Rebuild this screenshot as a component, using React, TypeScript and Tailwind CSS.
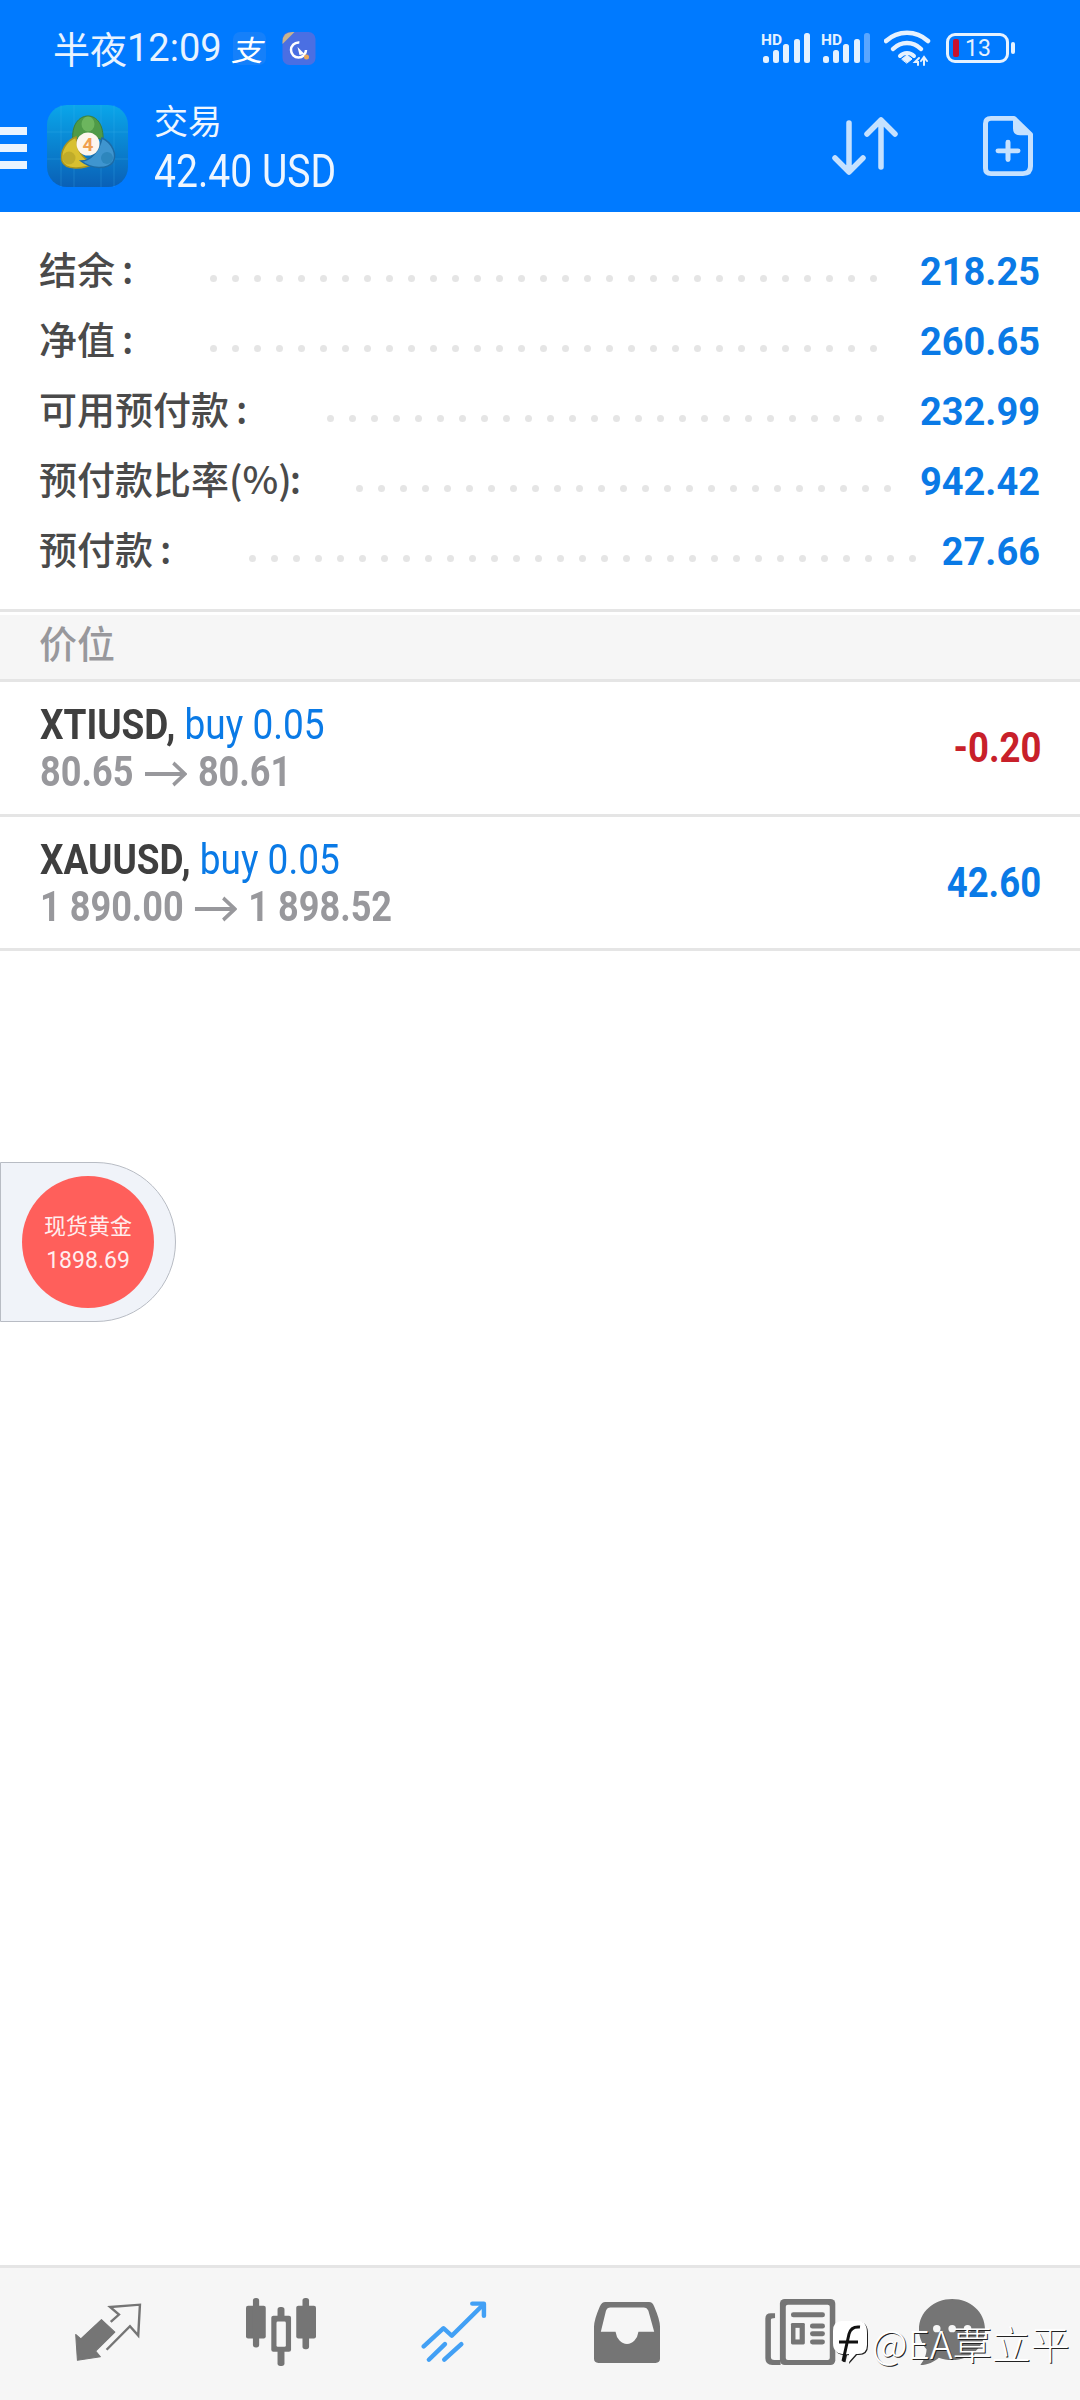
const cjk = '"Noto Sans CJK SC", "Noto Sans", sans-serif';

function Signal({ faded }: { faded?: boolean }) {
  const bars = [
    [2, 57, 6, 7],
    [12, 51, 6, 13],
    [22, 45, 6, 19],
    [33, 40, 6, 24],
    [43, 34, 6, 30],
  ];
  return (
    <svg width="50" height="34" viewBox="0 32 50 34">
      <text x="0" y="46" fontSize="15.5" fontWeight="700" fill="#e6f2ff" fontFamily="Roboto, sans-serif">HD</text>
      {bars.map((b, i) => (
        <rect key={i} x={b[0]} y={b[1]} width={b[2]} height={b[3]} rx="2.5" fill={faded && i === 4 ? "#5aa6ff" : "#e6f2ff"} />
      ))}
    </svg>
  );
}

function StatusIcons() {
  return (
    <div className="ml-auto flex items-center pr-[65px]">
      <Signal />
      <div className="ml-[10px]"><Signal faded /></div>
      <svg className="ml-[13px]" width="47" height="36" viewBox="0 0 47 36" fill="none" stroke="#e6f2ff" strokeLinecap="round">
        <path d="M2 11 C14 0 32 0 44 11" strokeWidth="4.5" />
        <path d="M9 19 C17 11 29 11 37 19" strokeWidth="4.5" />
        <path d="M16 26 C20 22 26 22 30 26" strokeWidth="4" />
        <path d="M18 29 L23 25 L28 29 L23 33 Z" fill="#e6f2ff" strokeWidth="1" />
        <path d="M35 28 L31 32 L34 32 L34 35 M40 35 V28 M37 31 L40 27 L43 31" strokeWidth="2" />
      </svg>
      <div className="ml-[15px] flex items-center">
        <div className="flex h-[30px] w-[63px] items-center rounded-[9px] border-[3px] border-[#e6f2ff] pl-[4px]">
          <div className="h-[18px] w-[6px] rounded-[2px] bg-[#c8102e]" />
          <span className="ml-[6px] text-[23px] leading-none text-[#e6f2ff]" style={{ fontFamily: "Roboto, sans-serif" }}>13</span>
        </div>
        <div className="ml-[2px] h-[12px] w-[4px] rounded-full bg-[#e6f2ff]" />
      </div>
    </div>
  );
}

function Mt4Logo() {
  return (
    <svg width="81" height="82" viewBox="0 0 81 82">
      <defs>
        <linearGradient id="mtbg" x1="0" y1="0" x2="0" y2="1">
          <stop offset="0" stopColor="#0aa6ea" />
          <stop offset="1" stopColor="#0a60b6" />
        </linearGradient>
      </defs>
      <rect width="81" height="82" rx="20" fill="url(#mtbg)" />
      <path d="M0 27H81M0 54H81M14 0V82M27 0V82M54 0V82M67 0V82" stroke="#4cb8ee" strokeOpacity="0.25" strokeWidth="1" />
      <path d="M26 36 C24 20 32 11 41 11 C50 11 57 20 56 36 C50 30 32 30 26 36Z" fill="#4f9a48" stroke="#3c7f38" strokeWidth="1" />
      <ellipse cx="41" cy="19" rx="6.5" ry="7.5" fill="#6cb55e" />
      <path d="M29 32 C19 36 13 46 15 56 C18 65 36 65 48 58 C38 56 31 48 30 38Z" fill="#d8c030" stroke="#a89420" strokeWidth="1.5" />
      <circle cx="22" cy="53" r="6.5" fill="#c0ac2a" />
      <path d="M55 33 C66 38 70 50 66 57 C60 65 44 64 34 56 C44 56 52 46 55 33Z" fill="#3f95cf" stroke="#1d6ba5" strokeWidth="1.5" />
      <circle cx="60" cy="53" r="6" fill="#2d86bd" />
      <circle cx="41" cy="39" r="11.5" fill="#fdf6ee" />
      <text x="41" y="46" textAnchor="middle" fontSize="19" fontWeight="700" fill="#f0a050" fontFamily="Roboto, sans-serif">4</text>
    </svg>
  );
}

const dotRows = [
  { label: "结余", value: "218.25", start: 210, dots: 31 },
  { label: "净值", value: "260.65", start: 210, dots: 31 },
  { label: "可用预付款", value: "232.99", start: 327, dots: 26 },
  { label: "预付款比率(%)", value: "942.42", start: 356, dots: 25 },
  { label: "预付款", value: "27.66", start: 249, dots: 31 },
];

function SummaryRow({ row }: { row: (typeof dotRows)[number] }) {
  const tight = row.label.includes("%");
  return (
    <div className="relative flex h-[70px] items-center">
      <span className="-ml-[1px] shrink-0 whitespace-nowrap pb-[4px] text-[38px] font-medium leading-none text-[#4a4a4a]" style={{ fontFamily: cjk }}>
        {row.label}
        <span className={tight ? "-ml-[2px]" : "ml-[7px]"}>:</span>
      </span>
      <div className="absolute top-[40px] flex gap-[15px]" style={{ left: row.start - 40 }}>
        {Array.from({ length: row.dots }).map((_, i) => (
          <span key={i} className="h-[7px] w-[7px] rounded-full bg-[#e5e5e5]" />
        ))}
      </div>
      <span className="ml-auto pt-[3px] text-[38px] font-bold leading-none text-[#0a7ae6]" style={{ fontFamily: "Roboto, sans-serif" }}>
        {row.value}
      </span>
    </div>
  );
}

function Arrow() {
  return (
    <svg className="mx-[13px] inline-block align-[-1px]" width="49" height="26" viewBox="0 0 49 26" fill="none" stroke="#98989c" strokeWidth="4">
      <path d="M0 13 H47 M33 2 L46.5 13 L33 24" />
    </svg>
  );
}

function Position({ sym, vol, from, to, profit, red }: { sym: string; vol: string; from: string; to: string; profit: string; red?: boolean }) {
  return (
    <div className="flex h-[134.5px] items-center justify-between border-b-[3px] border-[#e5e5e5] pl-[40px] pr-[40px]" style={{ fontFamily: "Roboto, sans-serif" }}>
      <div className="flex flex-col">
        <span className="origin-left scale-x-[0.86] whitespace-nowrap text-[43px] leading-[49px]">
          <b className="font-bold text-[#3f3f3f]">{sym},</b> <span className="text-[#0a7ae6]">{vol}</span>
        </span>
        <span className="origin-left scale-x-[0.86] whitespace-nowrap text-[42px] font-bold leading-[46px] text-[#98989c]">
          {from}
          <Arrow />
          {to}
        </span>
      </div>
      <span className={`origin-right translate-x-[1px] scale-x-[0.85] text-[43px] font-bold leading-none ${red ? "text-[#c8202a]" : "text-[#0a7ae6]"}`}>{profit}</span>
    </div>
  );
}

function NavIcons() {
  const g = "#757575";
  const bg = "#f6f6f6";
  return (
    <div className="flex h-[132px] items-center bg-[#f6f6f6] pb-[4px]">
      <svg className="ml-[75px]" width="67" height="58" viewBox="218 160 195 175" preserveAspectRatio="none" fill="none">
        <path d="M220 255 L235 268 L295 210 L334 248 L278 305 L292 322 L225 333 Z" fill={g} stroke={g} strokeWidth="3" strokeLinejoin="round" />
        <path d="M322 217 L346 195 L320 172 L407 165 L402 258 L378 230 L310 301" stroke={g} strokeWidth="7" />
      </svg>
      <svg className="ml-[104px]" width="70" height="68" viewBox="715 145 202 202" preserveAspectRatio="none" fill={g}>
        <rect x="715" y="168" width="57" height="97" rx="6" />
        <rect x="735" y="145" width="18" height="147" rx="8" />
        <rect x="860" y="168" width="57" height="97" rx="6" />
        <rect x="878" y="145" width="19" height="152" rx="8" />
        <rect x="806" y="172" width="20" height="175" rx="8" />
        <rect x="788" y="198" width="57" height="107" rx="6" />
        <rect x="803" y="215" width="27" height="75" rx="4" fill={bg} />
      </svg>
      <svg className="ml-[105px]" width="66" height="62" viewBox="1222 150 193 187" preserveAspectRatio="none" fill="none" stroke="#42a0f5" strokeWidth="13" strokeLinecap="round" strokeLinejoin="round">
        <path d="M1230 287 L1288 232 L1312 255 L1403 162" />
        <path d="M1372 158 H1406 V195" />
        <path d="M1245 327 L1292 280" />
        <path d="M1290 327 L1340 280" />
      </svg>
      <svg className="ml-[107px]" width="66" height="61" viewBox="157 152 193 181" preserveAspectRatio="none">
        <path d="M190 152 H318 Q328 152 333 165 Q350 205 350 225 V320 Q350 333 337 333 H170 Q157 333 157 320 V225 Q157 205 174 165 Q180 152 190 152 Z" fill={g} />
        <path d="M205 168 H302 Q312 168 316 178 L333 240 H287 A34 44 0 0 1 220 240 H177 L192 178 Q195 168 205 168 Z" fill={bg} />
      </svg>
      <svg className="ml-[105px]" width="71" height="66" viewBox="655 143 205 199" preserveAspectRatio="none">
        <rect x="698" y="143" width="160" height="199" rx="14" fill={g} />
        <rect x="715" y="160" width="127" height="167" rx="6" fill={bg} />
        <path d="M684 186 H672 Q656 186 656 202 V322 Q656 342 676 342 H700 V327 H682 Q672 327 672 318 V206 Q672 200 684 200 Z" fill={g} />
        <rect x="730" y="183" width="98" height="15" rx="7" fill={g} />
        <rect x="730" y="215" width="40" height="65" rx="4" fill={g} />
        <rect x="743" y="230" width="12" height="35" fill={bg} />
        <rect x="785" y="217" width="43" height="15" rx="7" fill={g} />
        <rect x="785" y="240" width="43" height="15" rx="7" fill={g} />
        <rect x="785" y="265" width="43" height="15" rx="7" fill={g} />
      </svg>
      <svg className="ml-[83px]" width="66" height="66" viewBox="1100 144 193 198" preserveAspectRatio="none">
        <path d="M1197 144 C1250 144 1293 183 1293 235 C1293 288 1250 327 1197 327 C1182 327 1170 325 1158 320 C1145 332 1125 342 1104 342 C1115 328 1122 310 1122 295 C1108 280 1100 258 1100 235 C1100 183 1144 144 1197 144 Z" fill={g} />
        <circle cx="1152" cy="233" r="11" fill={bg} />
        <circle cx="1197" cy="233" r="11" fill={bg} />
        <circle cx="1242" cy="233" r="11" fill={bg} />
      </svg>
    </div>
  );
}

export default function App() {
  return (
    <div className="relative flex h-[2400px] w-[1080px] flex-col overflow-hidden bg-white" style={{ fontFamily: cjk }}>
      <header className="h-[212px] shrink-0 bg-[#007aff]">
        <div className="flex h-[96px] items-center pl-[53px] text-[#e8f3ff]">
          <span className="text-[37px] leading-none">半夜</span>
          <span className="text-[38px] leading-none" style={{ fontFamily: "Roboto, sans-serif" }}>12:09</span>
          <div className="ml-[11px] flex h-[33px] w-[33px] items-center justify-center rounded-[7px] bg-[#1580fa]">
            <span className="-skew-x-12 scale-x-110 text-[29px] leading-none text-white">支</span>
          </div>
          <svg className="ml-[16px]" width="34" height="33" viewBox="0 0 33 33">
            <rect width="33" height="33" rx="7" fill="#4a6fe3" />
            <path d="M0 10 Q0 0 10 0 H12 L0 12 Z" fill="#c8b48e" />
            <circle cx="16" cy="18" r="7.5" fill="none" stroke="#fff" strokeWidth="2.5" strokeDasharray="36 11" />
            <path d="M15 15 L22 22 L17 23 Z" fill="#fff" />
            <circle cx="24" cy="25" r="2.5" fill="#eaa85a" />
          </svg>
          <StatusIcons />
        </div>
        <div className="flex h-[116px] items-start">
          <div className="mt-[31px] flex w-[27px] flex-col gap-[9px]">
            <div className="h-[8px] bg-[#eaf4ff]" />
            <div className="h-[8px] bg-[#eaf4ff]" />
            <div className="h-[8px] bg-[#eaf4ff]" />
          </div>
          <div className="ml-[20px] mt-[9px]"><Mt4Logo /></div>
          <div className="ml-[26px] flex flex-col text-[#eef6ff]">
            <span className="mt-[3px] text-[34px] leading-[42px]">交易</span>
            <span className="mt-[5px] origin-left scale-x-[0.85] whitespace-nowrap text-[46px] leading-[50px]" style={{ fontFamily: "Roboto, sans-serif" }}>42.40 USD</span>
          </div>
          <svg className="ml-auto mt-[21px]" width="66" height="58" viewBox="0 0 66 58" fill="none" stroke="#c5e1ff" strokeWidth="5.5" strokeLinecap="round" strokeLinejoin="round">
            <path d="M17 6 V54 M3 41 L17 55 L31 41" />
            <path d="M49 50 V3 M35 17 L49 3 L63 17" />
          </svg>
          <svg className="ml-[85px] mr-[47px] mt-[20px]" width="50" height="60" viewBox="0 0 50 62" preserveAspectRatio="none" fill="none" stroke="#c5e1ff" strokeLinejoin="round">
            <path d="M8 2.5 H31 L47.5 19 V52 Q47.5 59.5 40 59.5 H8 Q2.5 59.5 2.5 54 V8 Q2.5 2.5 8 2.5 Z" strokeWidth="5" />
            <path d="M31 3 V13 Q31 19 37 19 H47 Z" fill="#c5e1ff" strokeWidth="2" />
            <path d="M25 27 V45 M15 36 H35" strokeWidth="5" strokeLinecap="round" />
          </svg>
        </div>
      </header>

      <section className="h-[397px] shrink-0 px-[40px] pt-[23px]">
        {dotRows.map((r) => (
          <SummaryRow key={r.label} row={r} />
        ))}
      </section>

      <div className="h-[3px] shrink-0 bg-[#e5e5e5]" />
      <div className="mt-[3px] flex h-[67px] shrink-0 items-center border-b-[3px] border-[#e5e5e5] bg-[#f6f6f6] pb-[11px] pl-[39px] text-[38px] font-medium leading-none text-[#98989c]">
        价位
      </div>
      <Position sym="XTIUSD" vol="buy 0.05" from="80.65" to="80.61" profit="-0.20" red />
      <Position sym="XAUUSD" vol="buy 0.05" from="1 890.00" to="1 898.52" profit="42.60" />

      <main className="flex-1" />

      <div className="h-[3px] shrink-0 bg-[#e5e5e5]" />
      <NavIcons />

      <div className="absolute left-0 top-[1162px] flex h-[160px] w-[176px] items-center rounded-r-[80px] border border-[#b8bcc4] bg-[#f0f3f9] pl-[21px]">
        <div className="flex h-[132px] w-[132px] flex-col items-center justify-center rounded-full bg-[#ff5f5b] text-[#ffeeee]">
          <span className="text-[22px] leading-[28px]">现货黄金</span>
          <span className="mt-[8px] pt-[1px] text-[23px] leading-[28px]" style={{ fontFamily: "Roboto, sans-serif" }}>1898.69</span>
        </div>
      </div>

      <div className="absolute left-[832px] top-[2319px] flex items-center">
        <svg className="[filter:drop-shadow(1px_1px_0_#222)]" width="36" height="46" viewBox="0 0 36 46">
          <path d="M10 2 H26 Q35 2 35 14 V26 Q35 36 24 35 L16 44 L17 35 Q1 37 1 24 V12 Q1 2 10 2 Z" fill="#fff" />
          <path d="M28 8 Q19 7 17 15 L11 42 M7 23 H26" fill="none" stroke="#111" strokeWidth="3" />
        </svg>
        <span className="ml-[4px] whitespace-nowrap text-[39px] font-light leading-none text-white [text-shadow:1px_1px_0_#222]">@EA覃立平</span>
      </div>
    </div>
  );
}
